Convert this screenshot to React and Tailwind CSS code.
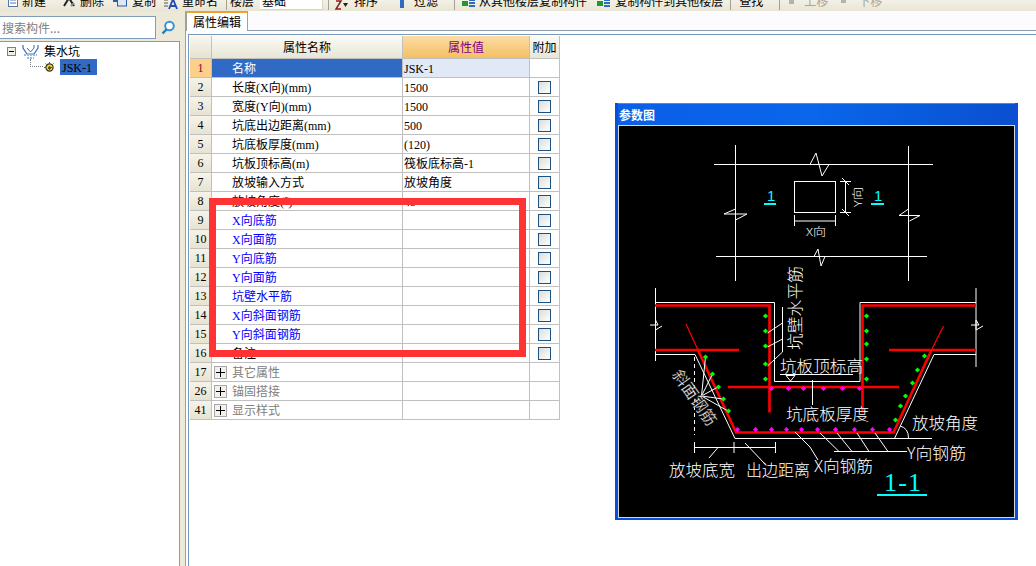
import React from "react";

const Mx = ({ t }) => (
  <span className="whitespace-nowrap">
    {t.split(/([\x00-\x7f]+)/).map((p, i) =>
      /^[\x00-\x7f]+$/.test(p) ? (
        <span key={i} className="[font-family:'Liberation_Serif',serif] text-[12px]">{p}</span>
      ) : (
        <span key={i}>{p}</span>
      )
    )}
  </span>
);

const rows = [
  { n: 1, a: "名称", v: "JSK-1", sel: true },
  { n: 2, a: "长度(X向)(mm)", v: "1500", c: true },
  { n: 3, a: "宽度(Y向)(mm)", v: "1500", c: true },
  { n: 4, a: "坑底出边距离(mm)", v: "500", c: true },
  { n: 5, a: "坑底板厚度(mm)", v: "(120)", c: true },
  { n: 6, a: "坑板顶标高(m)", v: "筏板底标高-1", c: true },
  { n: 7, a: "放坡输入方式", v: "放坡角度", c: true },
  { n: 8, a: "放坡角度(°)", v: "45", c: true },
  { n: 9, a: "X向底筋", v: "", c: true, blue: true },
  { n: 10, a: "X向面筋", v: "", c: true, blue: true },
  { n: 11, a: "Y向底筋", v: "", c: true, blue: true },
  { n: 12, a: "Y向面筋", v: "", c: true, blue: true },
  { n: 13, a: "坑壁水平筋", v: "", c: true, blue: true },
  { n: 14, a: "X向斜面钢筋", v: "", c: true, blue: true },
  { n: 15, a: "Y向斜面钢筋", v: "", c: true, blue: true },
  { n: 16, a: "备注", v: "", c: true },
  { n: 17, a: "其它属性", group: true },
  { n: 26, a: "锚固搭接", group: true },
  { n: 41, a: "显示样式", group: true },
];

const Row = ({ r }) => (
  <div className="flex h-[19px] border-b border-[#c0c0c0]">
    <div
      className={
        "w-[22px] shrink-0 flex items-center justify-center text-[12px] [font-family:'Liberation_Serif',serif] border-r border-[#c0c0c0] " +
        (r.sel ? "bg-[#fdd08a] text-[#800040]" : "bg-gradient-to-b from-[#f6f4ea] to-[#e6e3d2] text-black")
      }
    >
      {r.n}
    </div>
    <div
      className={
        "w-[191px] shrink-0 flex items-center border-r border-[#c0c0c0] " +
        (r.group ? "pl-[2px] " : "pl-[20px] ") +
        (r.sel ? "bg-[#316ac5] text-white" : r.blue ? "text-[#0000ff]" : r.group ? "text-[#808080]" : "text-black")
      }
    >
      {r.group && (
        <span className="w-[13px] h-[13px] mr-[5px] border border-[#a8a8a8] bg-[#f1f0ea] flex items-center justify-center">
          <svg width="9" height="9" viewBox="0 0 9 9" shapeRendering="crispEdges">
            <path d="M0 4.5H9M4.5 0V9" stroke="#000" fill="none" />
          </svg>
        </span>
      )}
      <Mx t={r.a} />
    </div>
    <div
      className={
        "w-[127px] shrink-0 flex items-center pl-[1px] border-r border-[#c0c0c0] text-black " +
        (r.sel ? "bg-[#e0e9f5]" : "")
      }
    >
      <Mx t={r.v || ""} />
    </div>
    <div className="w-[30px] shrink-0 flex items-center justify-center border-r border-[#c0c0c0]">
      {r.c && (
        <span className="w-[13px] h-[13px] border border-[#1c5180] bg-gradient-to-br from-[#dcdcd7] to-white" />
      )}
    </div>
  </div>
);

const TI = ({ cls, children }) => <span className={"shrink-0 " + cls}>{children}</span>;
const TT = ({ cls, children }) => <span className={"shrink-0 whitespace-nowrap " + cls}>{children}</span>;
const Sep = ({ cls }) => <span className={"shrink-0 w-[1px] h-[16px] bg-[#a5a294] " + cls} />;

const CopyIco = () => (
  <svg width="14" height="14" viewBox="0 0 14 14" className="block" shapeRendering="crispEdges">
    <rect x="0" y="7" width="6" height="5" fill="#1d9a2c" />
    <path d="M7 3h6M7 6h6M7 9h6M7 12h6" stroke="#2f6cc0" strokeWidth="2" fill="none" />
  </svg>
);

const Dots = ({ pts, color }) =>
  pts.map(([x, y], i) => (
    <polygon key={i} points={`${x - 2.6},${y} ${x},${y - 2.6} ${x + 2.6},${y} ${x},${y + 2.6}`} fill={color} />
  ));

const W = ({ d, w = 1 }) => <path d={d} stroke="#fff" strokeWidth={w} fill="none" />;
const R = ({ d, w = 2.6 }) => <path d={d} stroke="#ff0000" strokeWidth={w} fill="none" />;

const Lbl = ({ x, y, len, children, size = 16 }) => (
  <text x={x} y={y} textLength={len} lengthAdjust="spacingAndGlyphs" fontSize={size} fill="#fff" fontWeight="300">
    {children}
  </text>
);

const Drawing = () => (
  <svg
    width="394"
    height="391"
    viewBox="619 126 394 391"
    className="block [font-family:'Noto_Sans_CJK_SC',sans-serif]"
  >
    {/* plan */}
    <W d="M735.5 145V281M908.5 146V281M714 164.5H933M716 256.5H927" />
    <polygon points="810,164.5 816,153 822,176 829,164.5" fill="#000" stroke="#fff" />
    <polygon points="814,256.5 818,249 821,266 825,256.5" fill="#000" stroke="#fff" />
    <W d="M735.5 209L724 214H747L735.5 220" />
    <W d="M908.5 209L899 215.5H920L909.5 221" />
    <rect x="794.5" y="181.5" width="41" height="31" fill="none" stroke="#fff" />
    <W d="M845.5 181.5V212.5M840 181.5H851M840 212.5H851M842 178L849 185M842 209L849 216" />
    <W d="M794.5 221H835.5M794.5 215V226M835.5 215V226" />
    <Lbl x={806} y={236} len={20} size={11}>X向</Lbl>
    <g transform="translate(862 207) rotate(-90)">
      <Lbl x={0} y={0} len={20} size={11}>Y向</Lbl>
    </g>
    <text x={767} y={201} fontSize={15} fill="#00ffff" className="[font-family:'Liberation_Sans',sans-serif]">1</text>
    <text x={874} y={201} fontSize={15} fill="#00ffff" className="[font-family:'Liberation_Sans',sans-serif]">1</text>
    <path d="M764 204H776M871 204H884" stroke="#00ffff" strokeWidth="2" />

    {/* section white outline */}
    <W d="M655.5 288V361M655.5 302.5H774.5V381.5H860V302.5H976M976 288V367" />
    <W d="M655.5 354.5H695L735 438.5H932M894.5 438.5L934 354.5H976" />
    <W d="M650 325H658L655.5 320V330L662 326M971 325H979L976 320V330L983 326" />
    <path d="M694.5 357V435" stroke="#fff" strokeDasharray="4 3" />

    {/* rebar */}
    <R d="M655 305.5H769.5V412.5" />
    <R d="M976 305.5H862.5V412.5" />
    <R d="M728 387H899" />
    <R d="M655 350H739M889 350H976" />
    <R d="M686 324L697.5 349" w={1.2} />
    <R d="M697.5 349L736 432.5H893.5L931.5 350" />
    <R d="M931.5 350L943.5 326" w={1.2} />

    {/* dims and leaders */}
    <W d="M694.5 447.5H775.5M694.5 442V453M734 442V453M775.5 442V453M718 447.5L709 458M745 443L765 464" />
    <W d="M782.5 307V352L767.5 366M782.5 339L767.5 347M782.5 323L767.5 333" />
    <W d="M812.5 380V405M795 432L810 447L818 460" />
    <W d="M834 451.5H907M820 433L839 451.5M837 433L852 451.5M857 433L869 451.5M875 433L888 451.5" />
    <W d="M900 426Q908.5 428 908.5 438" />
    <W d="M780 374.5H853" />
    <polygon points="786,375.5 795,375.5 790.5,381" fill="none" stroke="#fff" />
    <W d="M701.5 396L705.5 357M701.5 396L712.5 374M701.5 396L718 387M701.5 396L723 399M701.5 396L728 411" />

    <Dots
      color="#00ff00"
      pts={[
        [765.5, 316], [765.5, 331], [765.5, 346], [765.5, 364], [765.5, 379],
        [705.5, 357], [712.5, 374], [718.5, 387], [723.5, 399], [728.5, 411],
        [866.5, 316], [866.5, 331], [866.5, 344], [866.5, 359], [866.5, 379],
        [924.5, 356], [917.5, 370], [912.5, 383], [905.5, 396], [900.5, 406], [895.5, 420],
      ]}
    />
    <Dots
      color="#ff00ff"
      pts={[
        [771.5, 388.5], [788.5, 388.5], [803.5, 388.5], [823.5, 388.5], [842.5, 388.5], [859.5, 388.5],
        [737.5, 429.5], [755.5, 429.5], [771.5, 429.5], [786.5, 429.5], [801.5, 429.5],
        [817.5, 429.5], [835.5, 429.5], [854.5, 429.5], [872.5, 429.5], [889.5, 429.5],
      ]}
    />

    <g transform="translate(801 350) rotate(-90)">
      <Lbl x={0} y={0} len={84}>坑壁水平筋</Lbl>
    </g>
    <Lbl x={780} y={372} len={83}>坑板顶标高</Lbl>
    <Lbl x={786} y={420} len={83}>坑底板厚度</Lbl>
    <Lbl x={912} y={429} len={66}>放坡角度</Lbl>
    <Lbl x={907} y={459} len={59}>Y向钢筋</Lbl>
    <Lbl x={814} y={472} len={59}>X向钢筋</Lbl>
    <Lbl x={669} y={476} len={66}>放坡底宽</Lbl>
    <Lbl x={746} y={476} len={64}>出边距离</Lbl>
    <g transform="translate(694 398) rotate(55)">
      <text x={-32} y={5} textLength={64} lengthAdjust="spacingAndGlyphs" fontSize={16} fill="#fff" stroke="#000" strokeWidth="0.3">斜面钢筋</text>
    </g>
    <text x={884} y={491} textLength={37} lengthAdjust="spacing" fontSize={26} fill="#00ffff" className="[font-family:'Liberation_Serif',serif]">1-1</text>
    <path d="M877 495H927" stroke="#00ffff" strokeWidth="2" />
  </svg>
);

export default function App() {
  return (
    <div className="relative w-[1036px] h-[566px] overflow-hidden bg-white text-[12px] leading-[14px] text-black [font-family:'Noto_Sans_CJK_SC',sans-serif]">
      {/* toolbar */}
      <div className="h-[11px] overflow-hidden bg-gradient-to-b from-[#f3f1e6] to-[#e8e5d4]">
        <div className="flex items-start h-[14px] -mt-[6px] leading-[14px]">
          <TI cls="ml-[8px]">
            <svg width="10" height="13" viewBox="0 0 10 13" className="block"><rect x="0.5" y="0.5" width="9" height="12" fill="#fff" stroke="#5577aa" /><path d="M2 6H8M2 9H8" stroke="#5577aa" /></svg>
          </TI>
          <TT cls="ml-[4px]">新建</TT>
          <TI cls="ml-[17px]">
            <svg width="12" height="13" viewBox="0 0 12 13" className="block"><path d="M1 12L6 4M11 12L6 4" stroke="#222" strokeWidth="2" /><path d="M8 12L11 9" stroke="#888" strokeWidth="2" /></svg>
          </TI>
          <TT cls="ml-[5px]">删除</TT>
          <TI cls="ml-[9px]">
            <svg width="14" height="13" viewBox="0 0 14 13" className="block"><rect x="4.5" y="1" width="9" height="11" fill="#dfe8f7" stroke="#2c5aa8" /><path d="M0 7H5" stroke="#2c5aa8" strokeWidth="2" /></svg>
          </TI>
          <TT cls="ml-[5px]">复制</TT>
          <TI cls="ml-[7px]">
            <svg width="16" height="16" viewBox="0 0 16 16" className="block"><path d="M1 6H5M1 9H5M1 12H5" stroke="#555" /><path d="M6 15L10 5L14 15M7.5 12H12.5" stroke="#2348b8" strokeWidth="1.8" fill="none" /></svg>
          </TI>
          <TT cls="ml-[3px]">重命名</TT>
          <Sep cls="ml-[8px]" />
          <TT cls="ml-[3px]">楼层</TT>
          <span className="shrink-0 ml-[6px] w-[63px] h-[16px] bg-white flex border-r border-b border-[#d8d5c4]">
            <span className="ml-[2px]">基础</span>
          </span>
          <Sep cls="ml-[5px]" />
          <TI cls="ml-[6px]">
            <svg width="13" height="16" viewBox="0 0 13 16" className="block"><path d="M1 7H6L1 15H6" stroke="#8a1c1c" strokeWidth="1.5" fill="none" /><path d="M8 9H13L10.5 13Z" fill="#222" /></svg>
          </TI>
          <TT cls="ml-[6px]">排序</TT>
          <TI cls="ml-[22px]">
            <svg width="4" height="14" viewBox="0 0 4 14" className="block"><rect width="4" height="14" fill="#2f6cc0" /></svg>
          </TI>
          <TT cls="ml-[10px]">过滤</TT>
          <Sep cls="ml-[16px]" />
          <TI cls="ml-[7px]"><CopyIco /></TI>
          <TT cls="ml-[3px]">从其他楼层复制构件</TT>
          <TI cls="ml-[10px]"><CopyIco /></TI>
          <TT cls="ml-[4px]">复制构件到其他楼层</TT>
          <Sep cls="ml-[7px]" />
          <TT cls="ml-[8px]">查找</TT>
          <Sep cls="ml-[16px]" />
          <TI cls="ml-[9px]">
            <svg width="5" height="12" viewBox="0 0 5 12" className="block"><rect y="6" width="5" height="4" fill="#b5b3a8" /></svg>
          </TI>
          <TT cls="ml-[10px] text-[#a8a69b]">上移</TT>
          <TI cls="ml-[13px]">
            <svg width="5" height="12" viewBox="0 0 5 12" className="block"><rect y="6" width="5" height="3" fill="#b5b3a8" /></svg>
          </TI>
          <TT cls="ml-[12px] text-[#a8a69b]">下移</TT>
        </div>
      </div>

      <div className="flex h-[555px]">
        {/* left panel */}
        <div className="w-[186px] shrink-0 flex flex-col bg-[#ece9d8] border-r border-[#a0a0a0] pr-[5px]">
          <div className="flex h-[30px] pt-[5px] pb-[2px] shrink-0">
            <div className="w-[156px] h-[23px] bg-white border border-[#7f9db9] border-l-0 flex items-center pl-[2px] text-[#808080]">
              搜索构件...
            </div>
            <div className="w-[24px] flex items-center justify-center">
              <svg width="15" height="15" viewBox="0 0 15 15">
                <circle cx="8.5" cy="6" r="4.3" fill="#fff" stroke="#3a90d8" strokeWidth="2" />
                <path d="M5.5 9.5L1.5 13.5" stroke="#2a78c0" strokeWidth="2.4" />
              </svg>
            </div>
          </div>
          <div className="flex-1 bg-white border-t border-r border-[#7f9db9] pt-[1px]">
            <div className="flex items-center h-[16px] pl-[7px]">
              <span className="w-[9px] h-[9px] border border-[#808080] bg-[#f0f0e8] flex items-center justify-center">
                <span className="w-[5px] h-[1px] bg-black" />
              </span>
              <svg width="17" height="17" viewBox="0 0 17 17" className="ml-[6px]">
                <path d="M1 2V5L5 11H12L16 5V2" fill="none" stroke="#2f6cc0" strokeWidth="1.2" />
                <path d="M5 5L8.5 9L12 5V2" fill="none" stroke="#2f6cc0" />
                <path d="M2 12H15M5 15H12" stroke="#9bbbe0" strokeWidth="2" strokeDasharray="2 1" />
              </svg>
              <span className="ml-[5px]">集水坑</span>
            </div>
            <div className="flex items-center h-[16px] pl-[30px]">
              <span className="w-[13px] h-[8px] -mt-[8px] border-l border-b border-dotted border-[#808080] shrink-0" />
              <svg width="11" height="11" viewBox="0 0 11 11" className="ml-[1px] shrink-0">
                <circle cx="5.5" cy="5.5" r="3.6" fill="#ffe000" stroke="#333" strokeWidth="1.2" />
                <path d="M5.5 0V11M0 5.5H11M1.5 1.5L9.5 9.5M9.5 1.5L1.5 9.5" stroke="#6a5a00" strokeDasharray="1.5 5" />
                <circle cx="5.5" cy="5.5" r="1.2" fill="#333" />
              </svg>
              <span className="ml-[5px] w-[37px] h-[16px] bg-[#316ac5] pl-[2px] flex items-center shrink-0">
                <Mx t="JSK-1" />
              </span>
            </div>
          </div>
        </div>

        {/* right panel */}
        <div className="flex-1 flex flex-col min-w-0 bg-white">
          <div className="h-[20px] shrink-0 bg-[#fcfcfe] border-b border-[#8f9aa5] relative">
            <div className="w-[62px] h-[20px] bg-white border-t-2 border-t-[#f0a030] border-x border-x-[#a0a0a0] flex items-center justify-center">
              属性编辑
            </div>
          </div>
          <div className="h-[3px] shrink-0 bg-[#fcfdfe]" />
          <div className="flex-1 border-t border-l border-[#7799bb] ml-[2px] pt-[1px] pl-[1px] min-h-0">
            <div className="relative w-[370px]">
              <div className="flex h-[23px] border-b border-[#c0c0c0]">
                <div className="w-[22px] shrink-0 bg-gradient-to-b from-[#f8f7f0] to-[#e5e2d0] border-r border-[#c0c0c0]" />
                <div className="w-[191px] shrink-0 flex items-center justify-center bg-gradient-to-b from-[#fbfaf6] to-[#e9e6d6] border-r border-[#c0c0c0]">属性名称</div>
                <div className="w-[127px] shrink-0 flex items-center justify-center bg-gradient-to-b from-[#fcdca6] to-[#f4c060] text-[#800080] border-r border-[#c0c0c0]">属性值</div>
                <div className="w-[30px] shrink-0 flex items-center justify-center bg-gradient-to-b from-[#fbfaf6] to-[#e9e6d6] border-r border-[#c0c0c0]">附加</div>
              </div>
              {rows.map((r) => (
                <Row key={r.n} r={r} />
              ))}
              <div className="absolute left-[19px] top-[162px] w-[317px] h-[159px] border-[7px] border-[#ff3333]" />
            </div>
          </div>
        </div>
      </div>

      {/* floating window */}
      <div className="absolute left-[615px] top-[103px] w-[403px] h-[417px] flex flex-col bg-[#0a4fd6] border-x-[3px] border-b-[2px] border-[#0a4fd6]">
        <div className="h-[22px] shrink-0 bg-gradient-to-r from-[#0a5fe6] via-[#0a66ea] to-[#0a50d0] flex items-center pl-[1px] text-white font-bold text-[12px] border-t border-[#3d8df0]">
          参数图
        </div>
        <div className="flex-1 bg-black border border-[#d8d8d8] overflow-hidden">
          <Drawing />
        </div>
      </div>
    </div>
  );
}
